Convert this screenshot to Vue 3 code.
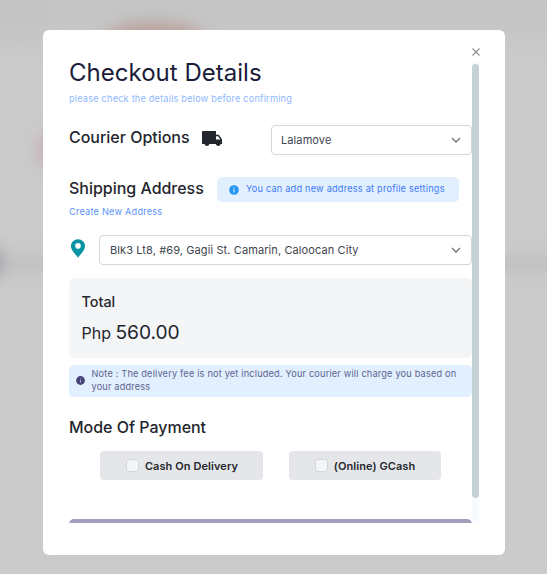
<script setup>
import { ref } from 'vue'

const courier = ref('Lalamove')
const address = ref('Blk3 Lt8, #69, Gagii St. Camarin, Caloocan City')
const payments = ['Cash On Delivery', '(Online) GCash']
</script>

<template>
  <div class="backdrop">
    <div class="blob cool"></div>
    <div class="blob red"></div>
    <div class="blob pink"></div>
    <div class="blob band"></div>
    <div class="blob dark"></div>
    <main class="modal">
      <button class="close" aria-label="Close">
        <svg width="8" height="8" viewBox="0 0 8 8"><path d="M.5.5l7 7M7.5.5l-7 7" fill="none" stroke="#8c8c8c" stroke-width="1.1" /></svg>
      </button>
      <div class="scroller">
        <div class="content">
          <h1>Checkout Details</h1>
          <p class="sub">please check the details below before confirming</p>

          <div class="courier">
            <h2>Courier Options</h2>
            <svg class="truck" width="20" height="16" viewBox="0 0 20 16">
              <path fill="#24262d" fill-rule="evenodd" d="M.5 0h13a.5.5 0 0 1 .5.5V3.800h2.800L20 8.200V13h-1.300a2.500 2.500 0 0 1-4.900 0H7.400a2.500 2.500 0 0 1-4.900 0H.5a.5.5 0 0 1-.5-.5V.5A.5.5 0 0 1 .5 0zM14 5.200V8.600h4.400l-2.300-3.400z" />
            </svg>
            <div class="select small">
              <span>{{ courier }}</span>
              <svg width="10" height="7" viewBox="0 0 10 7"><path d="M1 1l4 4 4-4" fill="none" stroke="#707070" stroke-width="1.300" /></svg>
            </div>
          </div>

          <div class="shipping">
            <h2>Shipping Address</h2>
            <div class="hint">
              <svg width="10" height="10" viewBox="0 0 10 10"><circle cx="5" cy="5" r="4.800" fill="#2196f3" /><path d="M5 4.300v3.200M5 2.300v1.200" stroke="#e1effe" stroke-width="1.100" /></svg>
              <span>You can add new address at profile settings</span>
            </div>
          </div>
          <a class="create">Create New Address</a>

          <div class="address">
            <svg class="pin" width="14" height="19" viewBox="0 0 15 20"><path fill="#0694a2" fill-rule="evenodd" d="M7.500 0C3.300 0 0 3.200 0 7.200c0 5 4.700 8.500 7.500 12.600C10.300 15.700 15 12.200 15 7.200 15 3.200 11.700 0 7.500 0zm0 4.200a3 3 0 1 1 0 6 3 3 0 0 1 0-6z" /></svg>
            <div class="select">
              <span>{{ address }}</span>
              <svg width="10" height="7" viewBox="0 0 10 7"><path d="M1 1l4 4 4-4" fill="none" stroke="#707070" stroke-width="1.300" /></svg>
            </div>
          </div>

          <section class="total">
            <div class="label">Total</div>
            <div class="price"><span class="php">Php</span><span class="amount">560.00</span></div>
          </section>

          <div class="note">
            <svg width="9" height="9" viewBox="0 0 9 9"><circle cx="4.500" cy="4.500" r="4.400" fill="#42447a" /><path d="M4.500 3.900v2.900M4.500 2.100v1" stroke="#a5a9c8" stroke-width="1" /></svg>
            <p>Note : The delivery fee is not yet included. Your courier will charge you based on your address</p>
          </div>

          <h2 class="mode">Mode Of Payment</h2>
          <div class="payments">
            <label v-for="p in payments" :key="p" class="option"><i></i><span>{{ p }}</span></label>
          </div>
          <button class="confirm" aria-label="Confirm"></button>
        </div>
        <div class="track"><div class="thumb"></div></div>
      </div>
    </main>
  </div>
</template>

<style>
body { margin: 0; overflow: hidden; }
</style>

<style scoped>
* { box-sizing: border-box; }
h1, h2, p { margin: 0; }
h1, h2, span { white-space: nowrap; }
svg { display: block; flex: none; }
button { border: 0; padding: 0; background: none; }
.backdrop {
  position: relative;
  width: 547px;
  height: 574px;
  padding: 30px 42px 0 43px;
  overflow: hidden;
  background: linear-gradient(#c5c5c5 0, #c6c6c6 30px, #cbcbcb 60px, #cbcbcb 100%);
  font-family: Inter, "Liberation Sans", sans-serif;
  color: #24262d;
}
.blob { position: absolute; border-radius: 50%; filter: blur(8px); }
.cool { left: -10px; top: 5px; width: 60px; height: 22px; background: #c2c3c5; }
.red { left: 106px; top: 23px; width: 98px; height: 30px; background: #b89d98; }
.pink { left: 38px; top: 132px; width: 30px; height: 38px; background: #c8acb8; }
.dark { left: -30px; top: 246px; width: 30px; height: 34px; background: #94949f; }
.band { left: -20px; top: 255px; width: 587px; height: 16px; border-radius: 0; background: #c0c0c2; }
.modal {
  position: relative;
  width: 462px;
  height: 525px;
  padding: 18px 26px 0;
  border-radius: 6px;
  background: #fff;
}
.close { display: flex; width: 8px; height: 8px; margin-left: 403px; }
.scroller { display: flex; width: 410px; height: 467px; overflow: hidden; }
.content { width: 403px; height: 467px; overflow: hidden; }
.track { width: 7px; height: 461px; margin-top: 6px; padding-top: 2px; background: #f7fbff; }
.thumb { width: 7px; height: 434px; border-radius: 3.5px; background: #c5d2d8; }
h1 { height: 34px; line-height: 34px; font-size: 24px; font-weight: 400; color: #1a1c3a; letter-spacing: .02px; }
.sub { height: 16px; margin-top: 1px; line-height: 16px; font-size: 9.2px; letter-spacing: .19px; color: #8fb8ff; }
.courier { display: flex; height: 30px; margin-top: 18px; }
h2 { height: 24px; line-height: 24px; font-size: 16px; font-weight: 500; letter-spacing: -.02px; }
.truck { margin: 6px 0 0 12.500px; }
.select {
  display: flex;
  align-items: center;
  justify-content: space-between;
  width: 373px;
  height: 30px;
  padding: 0 10px;
  border: 1px solid #d5d6d7;
  border-radius: 4px;
  background: #fff;
  font-size: 11px;
  letter-spacing: .1px;
  color: #40444c;
}
.select.small { width: 201px; margin-left: auto; padding-left: 9px; }
.shipping { display: flex; justify-content: space-between; height: 26px; margin-top: 21px; padding-right: 13px; }
.hint {
  display: flex;
  align-items: center;
  width: 242px;
  height: 25px;
  margin-top: 1px;
  padding-left: 12px;
  gap: 7px;
  border-radius: 5px;
  background: #e1effe;
  font-size: 9.2px;
  letter-spacing: .21px;
  color: #3f7cf6;
}
.hint span { line-height: 12px; padding-bottom: 1px; }
.create { display: block; height: 16px; margin-top: 2px; line-height: 16px; font-size: 9.2px; letter-spacing: .21px; color: #5b92fa; }
.address { display: flex; justify-content: space-between; height: 30px; margin-top: 15px; }
.pin { margin: 4px 0 0 2px; }
.total { height: 80px; margin-top: 13px; padding: 13px 12.500px; border-radius: 5px; background: #f4f5f7; }
.label { height: 22px; line-height: 22px; font-size: 14.4px; font-weight: 500; }
.price { display: flex; align-items: baseline; gap: 4.500px; height: 28px; margin-top: 5px; line-height: 28px; }
.php { font-size: 16px; }
.amount { font-size: 19.2px; letter-spacing: -.05px; }
.note { display: flex; align-items: center; height: 32px; margin-top: 7px; padding-left: 6.500px; gap: 7px; border-radius: 5px; background: #e1effe; font-size: 9.2px; letter-spacing: .18px; color: #60648f; }
.note svg { margin-bottom: 1px; }
.note p { width: 374px; padding-bottom: 2px; line-height: 13px; }
.mode { margin-top: 18px; }
.payments { display: flex; gap: 26px; margin-top: 12px; padding-left: 31px; }
.option { display: flex; align-items: center; justify-content: center; width: 163px; height: 29px; gap: 6px; border-radius: 4px; background: #e5e6ea; font-size: 11px; letter-spacing: .08px; font-weight: 600; }
.option:first-child { padding-left: 1px; }
.option:last-child { width: 152px; }
.option i { width: 13px; height: 13px; border: 1px solid #d5d6d7; border-radius: 3px; background: #f4f5f7; }
.confirm { display: block; width: 403px; height: 32px; margin-top: 39px; border-radius: 5px; background: #a09fbc; }
</style>
